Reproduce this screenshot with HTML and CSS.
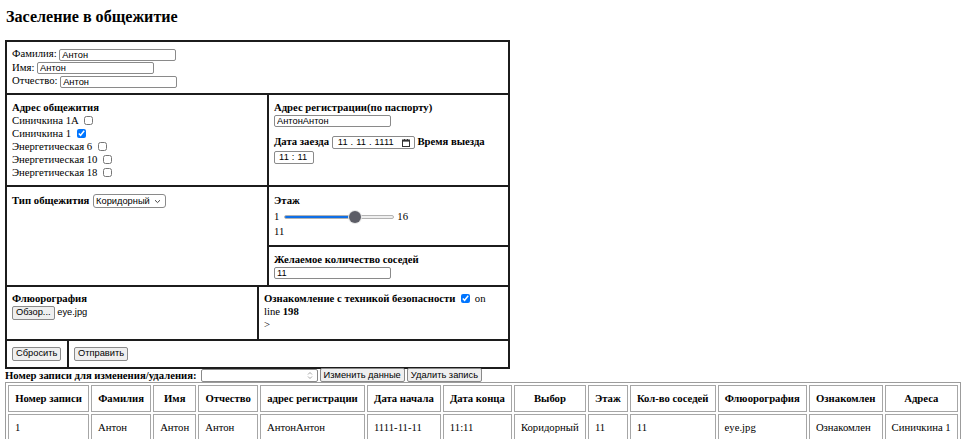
FILE: index.html
```html
<!DOCTYPE html>
<html lang="ru">
<head>
  <meta charset="UTF-8">
  <title>Заселение в общежитие</title>
  <link rel="stylesheet" href="styles.css">
</head>
<body>
  <h2 class="page-title">Заселение в общежитие</h2>

  <form class="form-box">
    <div class="row">
      <div class="cell person">
        Фамилия: <input type="text" value="Антон"><br>
        Имя: <input type="text" value="Антон"><br>
        Отчество: <input type="text" value="Антон">
      </div>
    </div>

    <div class="row">
      <div class="cell col-wide hostel">
        <b>Адрес общежития</b><br>
        Синичкина 1А <input type="checkbox"><br>
        Синичкина 1 <input type="checkbox" checked><br>
        Энергетическая 6 <input type="checkbox"><br>
        Энергетическая 10 <input type="checkbox"><br>
        Энергетическая 18 <input type="checkbox">
      </div>
      <div class="cell hostel">
        <b>Адрес регистрации(по паспорту)</b><br>
        <input type="text" value="АнтонАнтон">
        <div class="dates">
          <b>Дата заезда</b>
          <span class="field date-field">11 . 11 . 1111
            <svg width="8" height="8" viewBox="0 0 8 8"><rect x="0.5" y="1" width="7" height="6.5" fill="none" stroke="#333"/><rect x="0.5" y="1" width="7" height="1.6" fill="#333"/><rect x="2" y="0" width="1" height="1.5" fill="#333"/><rect x="5" y="0" width="1" height="1.5" fill="#333"/></svg>
          </span>
          <b>Время выезда</b><br>
          <span class="field time-field">11 : 11</span>
        </div>
      </div>
    </div>

    <div class="row">
      <div class="cell col-wide type-cell">
        <b>Тип общежития</b>
        <span class="select-box">
          <select>
            <option>Коридорный</option>
          </select>
          <svg width="7" height="5" viewBox="0 0 7 5"><path d="M1 1.2 L3.5 3.6 L6 1.2" fill="none" stroke="#444" stroke-width="1"/></svg>
        </span>
      </div>
      <div class="stack">
        <div class="cell floor">
          <b>Этаж</b>
          <div class="range-line">
            <span>1</span>
            <input type="range" min="1" max="16" value="11">
            <span>16</span>
          </div>
          11
        </div>
        <div class="cell neighbours">
          <b>Желаемое количество соседей</b><br>
          <input type="text" value="11">
        </div>
      </div>
    </div>

    <div class="row">
      <div class="cell col-photo docs">
        <b>Флюорография</b><br>
        <button type="button">Обзор...</button> <span class="file-name">eye.jpg</span>
      </div>
      <div class="cell docs">
        <b>Ознакомление с техникой безопасности</b> <input type="checkbox" checked> on<br>
        line <b>198</b><br>
        &gt;
      </div>
    </div>

    <div class="row">
      <div class="cell col-reset actions">
        <button type="reset">Сбросить</button>
      </div>
      <div class="cell actions">
        <button type="submit">Отправить</button>
      </div>
    </div>
  </form>

  <div class="record-bar">
    <b>Номер записи для изменения/удаления:</b>
    <span class="field num-field">
      <svg width="6" height="9" viewBox="0 0 6 9"><path d="M1 3.5 L3 1.5 L5 3.5 M1 5.5 L3 7.5 L5 5.5" fill="none" stroke="#9a9a9a" stroke-width="0.9"/></svg>
    </span>
    <button type="button">Изменить данные</button>
    <button type="button">Удалить запись</button>
  </div>

  <table class="records">
    <tr>
      <th>Номер записи</th>
      <th>Фамилия</th>
      <th>Имя</th>
      <th>Отчество</th>
      <th>адрес регистрации</th>
      <th>Дата начала</th>
      <th>Дата конца</th>
      <th>Выбор</th>
      <th>Этаж</th>
      <th>Кол-во соседей</th>
      <th>Флюорография</th>
      <th>Ознакомлен</th>
      <th>Адреса</th>
    </tr>
    <tr>
      <td>1</td>
      <td>Антон</td>
      <td>Антон</td>
      <td>Антон</td>
      <td>АнтонАнтон</td>
      <td>1111-11-11</td>
      <td>11:11</td>
      <td>Коридорный</td>
      <td>11</td>
      <td>11</td>
      <td>eye.jpg</td>
      <td>Ознакомлен</td>
      <td>Синичкина 1</td>
    </tr>
  </table>
</body>
</html>
```

FILE: styles.css
```css
body {
  margin: 0 5px;
  font-family: "Liberation Serif", "Times New Roman", serif;
  font-size: 10.7px;
  line-height: 13px;
  color: #000;
  background: #fff;
}
.page-title {
  font-size: 16.1px;
  line-height: 19px;
  margin: 7px 0 14px 1px;
}
.form-box {
  width: 505px;
  box-sizing: border-box;
  border: 2px solid #1c1c1c;
  margin: 0;
}
.form-box * {
  box-sizing: border-box;
}
.row {
  display: flex;
  border-top: 2px solid #1c1c1c;
}
.row:first-child {
  border-top: none;
}
.cell {
  flex: 1;
  padding: 5px 5px;
}
.cell + .cell,
.stack {
  border-left: 2px solid #1c1c1c;
}
.col-wide {
  flex: 0 0 260px;
}
.col-photo {
  flex: 0 0 250px;
}
.col-reset {
  flex: 0 0 60px;
}
.person {
  padding: 5px 5px 5px;
}
.hostel {
  padding: 6px 5px;
}
.type-cell {
  padding: 7px 5px;
}
.stack {
  flex: 1;
  display: flex;
  flex-direction: column;
}
.floor {
  flex: none;
  padding: 7px 5px 7px;
}
.floor + .neighbours {
  border-left: none;
  border-top: 2px solid #1c1c1c;
  padding: 6px 5px 6px;
}
.docs {
  padding: 5px 5px 8px;
}
.actions {
  padding: 5px 5px 6px;
}

/* controls */
input[type="text"],
.field,
select,
button,
.file-name {
  font-family: "Liberation Sans", Arial, sans-serif;
  font-size: 9.3px;
  color: #000;
  vertical-align: middle;
}
input[type="text"] {
  width: 117px;
  height: 12px;
  padding: 0 2px;
  margin: 0;
  border: 1px solid #8a8a8a;
  border-radius: 2px;
  line-height: 10px;
}
input[type="checkbox"] {
  width: 9px;
  height: 9px;
  margin: 0 2px 0 3px;
  vertical-align: -1px;
}
.field {
  display: inline-flex;
  align-items: center;
  height: 13px;
  padding: 0 3px;
  border: 1px solid #8a8a8a;
  border-radius: 2px;
  line-height: 11px;
  white-space: nowrap;
  box-sizing: border-box;
}
.dates {
  margin-top: 8px;
}
.date-field {
  width: 83px;
  justify-content: space-between;
  padding: 0 4px 0 5px;
  letter-spacing: 0.2px;
}
.time-field {
  width: 40px;
  padding: 0 4px;
  margin-top: 1px;
  letter-spacing: 0.2px;
}
.num-field {
  width: 117px;
  justify-content: flex-end;
  padding: 0 4px;
}
.select-box {
  display: inline-flex;
  align-items: center;
  gap: 4px;
  height: 14px;
  padding: 0 4px 0 2px;
  margin-left: 1px;
  border: 1px solid #8a8a8a;
  border-radius: 3px;
  vertical-align: middle;
}
.select-box select {
  -webkit-appearance: none;
  appearance: none;
  border: none;
  padding: 0;
  margin: 0;
  background: transparent;
  height: 12px;
  line-height: 12px;
}
button {
  height: 14px;
  padding: 0 3px;
  margin: 0;
  line-height: 11px;
  border: 1px solid #8a8a8a;
  border-radius: 2px;
  background: #efefef;
}

.range-line {
  display: flex;
  align-items: center;
  height: 18px;
  padding-top: 2px;
}
input[type="range"] {
  -webkit-appearance: none;
  appearance: none;
  width: 110px;
  height: 12px;
  margin: 0 3px 0 5px;
  background: transparent;
}
input[type="range"]::-webkit-slider-runnable-track {
  height: 4px;
  border-radius: 2px;
  border: 1px solid #b3b3b3;
  background: linear-gradient(to right, #0f6fe6 0, #0f6fe6 63%, #efefef 63%);
}
input[type="range"]::-webkit-slider-thumb {
  -webkit-appearance: none;
  width: 12px;
  height: 12px;
  margin-top: -5px;
  border-radius: 50%;
  background: #5c5d66;
  box-shadow: 0 0 0 1px #e6e6e6;
}

.record-bar {
  height: 13px;
  display: flex;
  align-items: center;
  gap: 2px;
}
.record-bar b {
  margin-right: 2px;
}

/* table of records */
.records {
  width: 100%;
  border: 1px solid #9c9c9c;
  border-spacing: 2px;
}
.records th,
.records td {
  border: 1px solid #a6a6a6;
  padding: 6px 6px;
  height: 27px;
  box-sizing: border-box;
  white-space: nowrap;
}
.records td {
  text-align: left;
}
```
